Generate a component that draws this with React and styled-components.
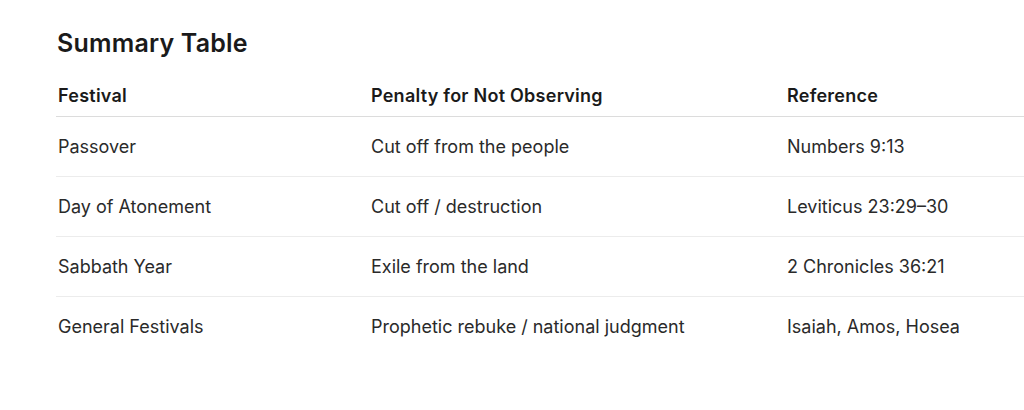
import React from 'react';
import styled, { createGlobalStyle } from 'styled-components';

const GlobalStyle = createGlobalStyle`
    html, body {
        margin: 0;
        padding: 0;
        background: #ffffff;
        overflow: hidden;
    }
    body {
        font-family: Inter, "Helvetica Neue", "Liberation Sans", Arial, sans-serif;
        color: #1d1d1f;
    }
`;

const rows = [
    ['Passover', 'Cut off from the people', 'Numbers 9:13'],
    ['Day of Atonement', 'Cut off / destruction', 'Leviticus 23:29\u201330'],
    ['Sabbath Year', 'Exile from the land', '2 Chronicles 36:21'],
    ['General Festivals', 'Prophetic rebuke / national judgment', 'Isaiah, Amos, Hosea'],
];

function App() {
    return (
        <Page>
            <GlobalStyle />
            <Title>Summary Table</Title>
            <Table>
                <colgroup>
                    <col style={{ width: 313 }} />
                    <col style={{ width: 416 }} />
                    <col />
                </colgroup>
                <thead>
                    <tr>
                        <HeadCell>Festival</HeadCell>
                        <HeadCell>Penalty for Not Observing</HeadCell>
                        <HeadCell>Reference</HeadCell>
                    </tr>
                </thead>
                <tbody>
                    {rows.map((r, i) => (
                        <Row key={r[0]} last={i === rows.length - 1}>
                            {r.map((c) => (
                                <Cell key={c}>{c}</Cell>
                            ))}
                        </Row>
                    ))}
                </tbody>
            </Table>
        </Page>
    );
}

const Page = styled.div`
    padding: 25px 0 0 56px;
    width: 100%;
    box-sizing: border-box;
`;

const Title = styled.h2`
    margin: 0 0 16px 1px;
    font-size: 25px;
    line-height: 36px;
    font-weight: 600;
    color: #1a1a1a;
    letter-spacing: 0.2px;
`;

const Table = styled.table`
    border-collapse: collapse;
    table-layout: fixed;
    width: 100%;
`;

const HeadCell = styled.th`
    text-align: left;
    font-size: 18px;
    font-weight: 600;
    color: #1a1a1a;
    letter-spacing: 0.25px;
    height: 39px;
    padding: 0 0 0 2px;
    vertical-align: top;
    line-height: 38px;
    border-bottom: 1.5px solid #dcdcdc;
`;

const Row = styled.tr`
    height: 60px;
    border-bottom: ${(p) => (p.last ? 'none' : '1px solid #ececec')};
`;

const Cell = styled.td`
    font-size: 18px;
    font-weight: 400;
    color: #2a2a2a;
    padding: 0 0 0 2px;
    line-height: 20px;
`;

export default App;
